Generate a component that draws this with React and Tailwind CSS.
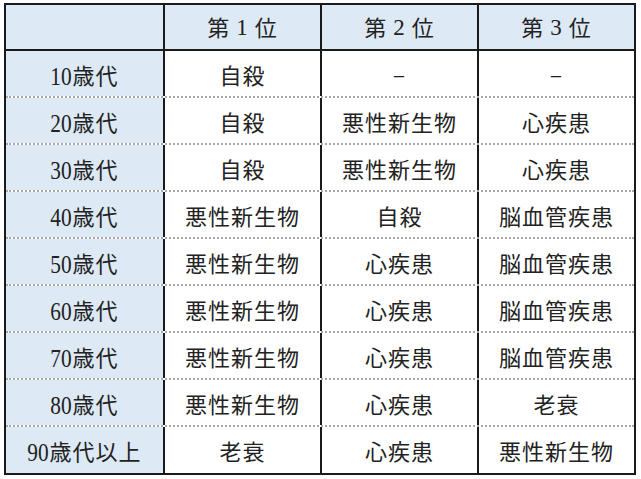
import React from 'react';

const headers = ['1', '2', '3'];

const rows = [
  ['10', '歳代', '自殺', '−', '−'],
  ['20', '歳代', '自殺', '悪性新生物', '心疾患'],
  ['30', '歳代', '自殺', '悪性新生物', '心疾患'],
  ['40', '歳代', '悪性新生物', '自殺', '脳血管疾患'],
  ['50', '歳代', '悪性新生物', '心疾患', '脳血管疾患'],
  ['60', '歳代', '悪性新生物', '心疾患', '脳血管疾患'],
  ['70', '歳代', '悪性新生物', '心疾患', '脳血管疾患'],
  ['80', '歳代', '悪性新生物', '心疾患', '老衰'],
  ['90', '歳代以上', '老衰', '心疾患', '悪性新生物'],
];

const font = { fontFamily: '"Liberation Serif", "Noto Sans CJK JP", sans-serif' };

const App = () => {
  return (
    <div className="w-[641px] h-[479px] bg-white pt-[3px] pl-[4px]" style={font}>
      <div className="w-[632px] border-2 border-[#1a1a1a] text-[#222] text-[22px] tracking-[1px]">
        <div className="grid grid-cols-[159px_157px_157px_155px] h-[46px] border-b-2 border-[#1a1a1a] bg-[#dde9f5]">
          <div className="border-r-2 border-[#1a1a1a]" />
          {headers.map((n, i) => (
            <div
              key={n}
              className={`flex items-center justify-center pt-[3px] ${i < 2 ? 'border-r-2 border-[#1a1a1a]' : ''}`}
            >
              第<span className="mx-[6px] text-[23px]">{n}</span>位
            </div>
          ))}
        </div>
        {rows.map((r, idx) => (
          <div
            key={r[0]}
            className={`grid grid-cols-[159px_157px_157px_155px] ${
              idx < rows.length - 1 ? 'h-[47px] border-b-2 border-dotted border-[#a8a8a8]' : 'h-[46px]'
            }`}
          >
            <div className="flex items-center justify-center pt-[5px] bg-[#dde9f5] border-r-2 border-[#1a1a1a]">
              <span className="inline-block -mx-[2px] text-[26px] tracking-[0px] scale-x-[0.82]">{r[0]}</span>
              <span>{r[1]}</span>
            </div>
            <div className="flex items-center justify-center pt-[5px] bg-white border-r-2 border-[#1a1a1a]">{r[2]}</div>
            <div className="flex items-center justify-center pt-[5px] bg-white border-r-2 border-[#1a1a1a]">{r[3]}</div>
            <div className="flex items-center justify-center pt-[5px] bg-white">{r[4]}</div>
          </div>
        ))}
      </div>
    </div>
  );
};

export default App;
